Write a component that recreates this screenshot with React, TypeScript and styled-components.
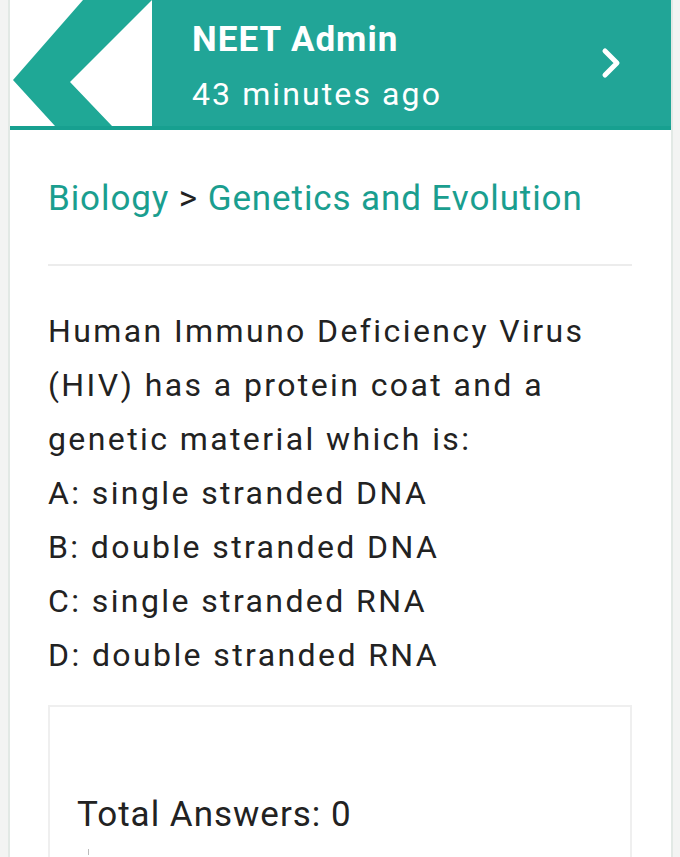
import React from 'react';
import styled, { createGlobalStyle } from 'styled-components';

const GlobalStyle = createGlobalStyle`
  html, body {
    margin: 0;
    padding: 0;
    background: #f3f4f3;
  }
  body {
    font-family: Roboto, "Noto Sans", Arial, sans-serif;
    color: #222;
  }
`;

const Page = styled.div`
  padding: 0 7px 0 8px;
`;

const Card = styled.div`
  background: #fff;
  border-left: 2px solid #e2e9e5;
  border-right: 2px solid #e2e9e5;
  min-height: 857px;
`;

const Header = styled.div`
  display: flex;
  align-items: center;
  height: 126px;
  background: #21a597;
  border-bottom: 4px solid #17a090;
`;

const LogoBox = styled.div`
  width: 142px;
  height: 126px;
  background: #fff;
  flex-shrink: 0;
  svg {
    display: block;
  }
`;

const Author = styled.div`
  flex: 1;
  padding: 14px 0 0 40px;
  color: #fff;
`;

const Name = styled.div`
  font-weight: 700;
  font-size: 35px;
  line-height: 40px;
  letter-spacing: 1px;
  margin-top: -6px;
`;

const Time = styled.div`
  font-size: 32px;
  line-height: 40px;
  letter-spacing: 2.1px;
  margin-top: 14px;
`;

const NextButton = styled.div`
  width: 30px;
  margin-right: 44px;
  display: flex;
  align-items: center;
  justify-content: center;
`;

const Body = styled.div`
  padding: 0 39px 0 38px;
`;

const Breadcrumb = styled.div`
  font-size: 35px;
  line-height: 40px;
  letter-spacing: 0.9px;
  padding-top: 49px;
  padding-bottom: 45px;
  border-bottom: 2px solid #ececec;
  color: #222;
`;

const Crumb = styled.span`
  color: #1a9e8f;
`;

const Question = styled.div`
  font-size: 32px;
  line-height: 54px;
  letter-spacing: 2.4px;
  padding-top: 38px;
  padding-bottom: 23px;
`;

const AnswerBox = styled.div`
  border: 2px solid #efefef;
  border-bottom: none;
  padding: 88px 27px 0;
  min-height: 160px;
`;

const Total = styled.div`
  font-size: 35px;
  line-height: 40px;
  letter-spacing: 1px;
`;

const Cursor = styled.div`
  width: 1px;
  height: 6px;
  background: #bbb;
  margin: 14px 0 0 11px;
`;

const Logo = () => (
  <svg width="142" height="126" viewBox="0 0 142 126">
    <polygon points="73,0 142,0 60,82 102,126 45,126 3,80" fill="#1fa896" />
  </svg>
);

const Chevron = () => (
  <svg width="24" height="32" viewBox="0 0 24 32">
    <polyline
      points="5,4 17,16 5,28"
      fill="none"
      stroke="#fff"
      strokeWidth="5"
      strokeLinecap="round"
      strokeLinejoin="round"
    />
  </svg>
);

const options = [
  'A: single stranded DNA',
  'B: double stranded DNA',
  'C: single stranded RNA',
  'D: double stranded RNA',
];

export default function App() {
  return (
    <>
      <GlobalStyle />
      <Page>
        <Card>
          <Header>
            <LogoBox>
              <Logo />
            </LogoBox>
            <Author>
              <Name>NEET Admin</Name>
              <Time>43 minutes ago</Time>
            </Author>
            <NextButton>
              <Chevron />
            </NextButton>
          </Header>
          <Body>
            <Breadcrumb>
              <Crumb>Biology</Crumb> &gt; <Crumb>Genetics and Evolution</Crumb>
            </Breadcrumb>
            <Question>
              Human Immuno Deficiency Virus (HIV) has a protein coat and a genetic material which is:
              {options.map((o) => (
                <div key={o}>{o}</div>
              ))}
            </Question>
            <AnswerBox>
              <Total>Total Answers: 0</Total>
              <Cursor />
            </AnswerBox>
          </Body>
        </Card>
      </Page>
    </>
  );
}
